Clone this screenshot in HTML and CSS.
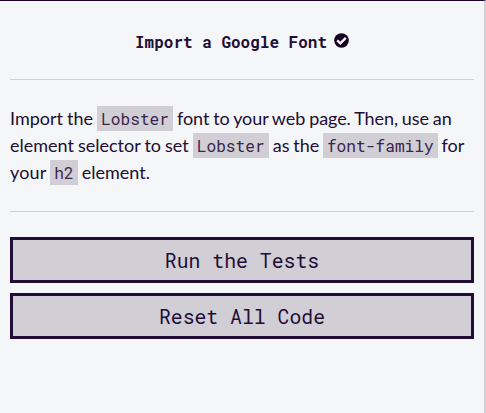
FILE: index.html
```html
<!DOCTYPE html>
<html lang="en">
<head>
<meta charset="utf-8">
<title>Import a Google Font</title>
<link rel="stylesheet" href="styles.css">
</head>
<body>
<main class="panel">
  <h1 class="title">Import a Google Font
    <svg class="check" viewBox="0 0 15 15"><circle cx="7.5" cy="7.5" r="7.3"/><path d="M3.2 7.3 6.4 10.3 11.8 4.9"/></svg>
  </h1>
  <hr>
  <p class="text">Import the <code>Lobster</code> <span class="snug">font to your web page. Then, use an</span> element selector to set <code>Lobster</code> <span class="tight">as the <code>font-family</code> for</span> <span class="loose">your</span> <code>h2</code> element.</p>
  <hr>
  <div class="actions">
    <button>Run the Tests</button>
    <button>Reset All Code</button>
  </div>
</main>
</body>
</html>
```
FILE: styles.css
```css
* { box-sizing: border-box; }
body { margin: 0; }
.panel {
  height: 413px;
  padding: 0 10px;
  border-top: 1px solid #1b0032;
  border-right: 2px solid #d0cdd5;
  background: #f5f6f8;
  color: #210d35;
  font: 18px/27px Lato, sans-serif;
}
.title {
  display: flex;
  align-items: center;
  justify-content: center;
  gap: 7px;
  margin: 0;
  padding: 26px 0 22px;
  font: 700 16px/30px "Roboto Mono", "DejaVu Sans Mono", monospace;
}
.check { width: 15px; height: 15px; margin-top: -3px; fill: #160024; }
.check path { fill: none; stroke: #f5f6f8; stroke-width: 2.5; }
hr { margin: 0; border: 0; border-top: 1px solid #d0d0d5; }
.text { margin: 25px 0; word-spacing: -0.6px; }
.snug { letter-spacing: -0.08px; }
.tight { word-spacing: -0.9px; }
.loose { letter-spacing: 0.12px; }
code {
  padding: 2px 4px;
  background: #d1ced6;
  color: #3a264b;
  font: 400 16.2px/24px "Roboto Mono", "DejaVu Sans Mono", monospace;
}
.actions { display: grid; gap: 10px; margin-top: 25px; }
button {
  height: 46px;
  padding: 0;
  border: 3px solid #210d35;
  background: #d1ced6;
  color: #210d35;
  font: 400 19.8px "Roboto Mono", "DejaVu Sans Mono", monospace;
}
```
